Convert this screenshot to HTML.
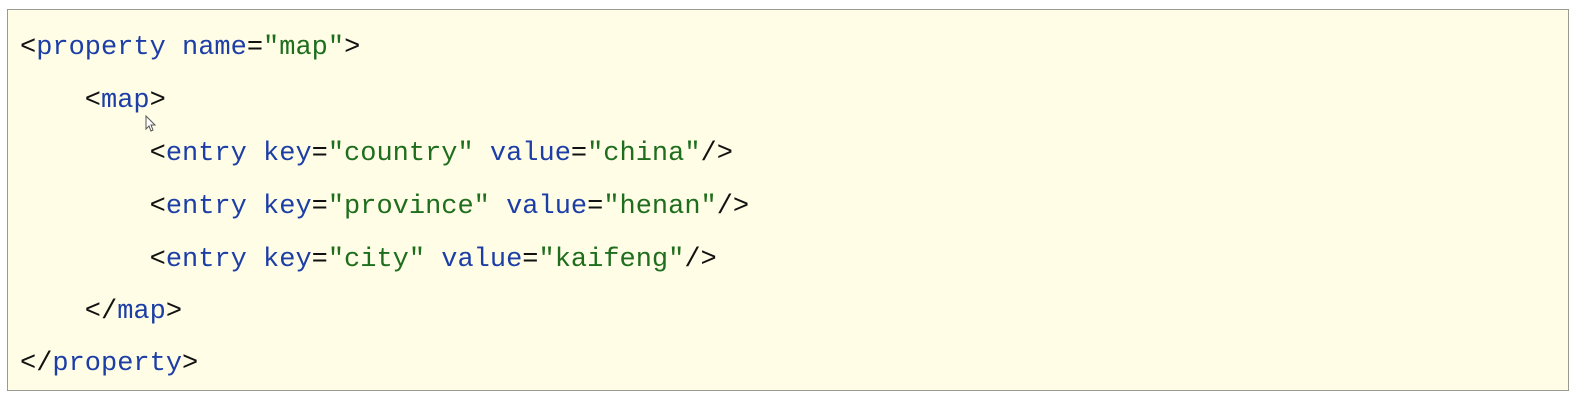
<!DOCTYPE html>
<html><head><meta charset="utf-8"><style>
html,body{margin:0;padding:0;background:#fff;width:1590px;height:408px;overflow:hidden}
.box{position:absolute;left:7px;top:9px;width:1562px;height:382px;background:#fffde6;border:1px solid #9a9a95;box-sizing:border-box}
.l{position:absolute;left:20px;font-family:"Liberation Mono",monospace;font-size:27px;white-space:pre;color:#111;line-height:30px}
.b{color:#1c3ea6}.g{color:#1e6e1e}
</style></head><body>
<div class="box"></div>
<div class="l" style="top:33px">&lt;<span class="b">property</span> <span class="b">name</span>=<span class="g">"map"</span>&gt;</div>
<div class="l" style="top:86px">    &lt;<span class="b">map</span>&gt;</div>
<div class="l" style="top:139px">        &lt;<span class="b">entry</span> <span class="b">key</span>=<span class="g">"country"</span> <span class="b">value</span>=<span class="g">"china"</span>/&gt;</div>
<div class="l" style="top:192px">        &lt;<span class="b">entry</span> <span class="b">key</span>=<span class="g">"province"</span> <span class="b">value</span>=<span class="g">"henan"</span>/&gt;</div>
<div class="l" style="top:245px">        &lt;<span class="b">entry</span> <span class="b">key</span>=<span class="g">"city"</span> <span class="b">value</span>=<span class="g">"kaifeng"</span>/&gt;</div>
<div class="l" style="top:297px">    &lt;/<span class="b">map</span>&gt;</div>
<div class="l" style="top:349px">&lt;/<span class="b">property</span>&gt;</div>
<svg style="position:absolute;left:145px;top:115px" width="12" height="18" viewBox="0 0 12 18"><path d="M1 1 L1 14 L4 11 L6 16 L8 15 L6 10 L10 10 Z" fill="#fff" stroke="#555" stroke-width="1"/></svg>
</body></html>
